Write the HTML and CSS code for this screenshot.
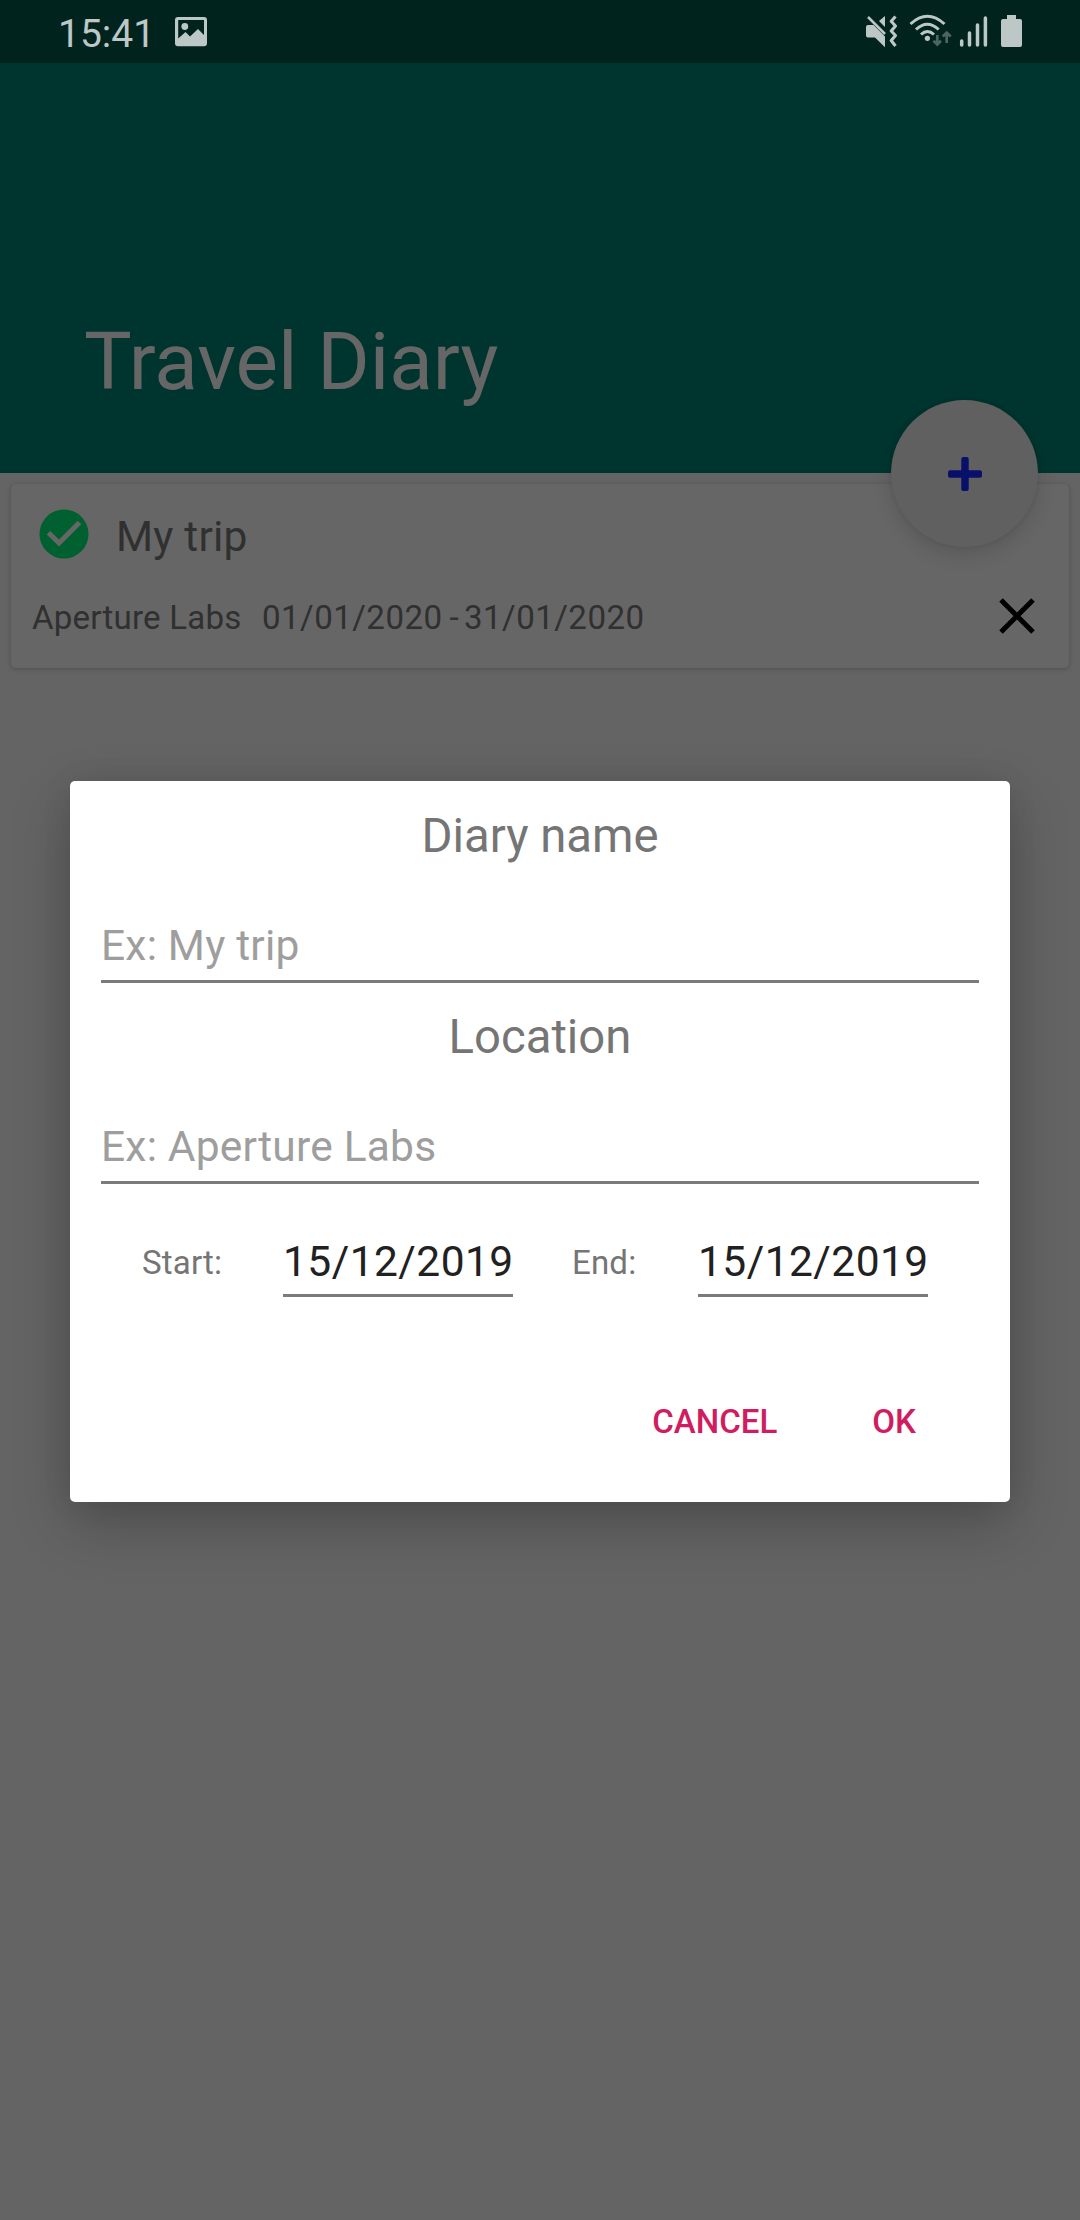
FILE: index.html
```html
<!DOCTYPE html>
<html lang="en">
<head>
<meta charset="utf-8">
<title>Travel Diary</title>
<link rel="stylesheet" href="styles.css">
</head>
<body>
<div class="screen">
  <div class="status-bar">
    <span class="clock">15:41</span>
    <svg class="photo-icon" width="32" height="30" viewBox="0 0 32 30">
      <path fill-rule="evenodd" d="M3 0H29Q32 0 32 3V26Q32 29.3 29 29.3H3Q0 29.3 0 26V3Q0 0 3 0ZM3.2 3V21.5L10.5 15L15 19.5L23 12L29 18V3Z"/>
      <circle cx="9.8" cy="9.5" r="3.4"/>
    </svg>
    <svg class="signal-icons" width="160" height="36" viewBox="0 0 160 36">
      <path d="M3 11H8.5L20 22.5V33.2L10 23.5H3Q1 23.5 1 21.5V13Q1 11 3 11ZM20 2V13L14 7Z"/>
      <path class="line" stroke-width="2.5" d="M3 3L20 20"/>
      <path class="line" stroke-width="3.1" stroke-linejoin="round" d="M30.5 2.5L26.2 7.2L30.5 12L26.2 17L30.5 21.5L26.2 26.5L30.5 32"/>
      <path class="line" stroke-width="3" d="M45.5 10Q62.3-5.5 79.5 10M51 15.5Q62.3 5 73.7 15.5M56 20.5Q62.3 14.5 69 20.5"/>
      <circle cx="62.4" cy="24.3" r="2.6"/>
      <g class="faint"><path class="line" stroke-width="2.7" d="M72.3 21V30M68.5 26.8L72.3 30.5L76 26.8M81.7 29V19.5M77.8 22.5L81.7 18.6L85.7 22.5"/></g>
      <path class="line" stroke-width="3.5" stroke-linecap="round" d="M96.7 27V31M104.5 19V31M112.5 11V31M120.4 4V31"/>
      <path d="M142 1H151V5H155Q157 5 157 7V31Q157 33 155 33H138Q136 33 136 31V7Q136 5 138 5H142Z"/>
    </svg>
  </div>
  <header class="app-header">
    <h1>Travel Diary</h1>
    <button class="fab" aria-label="Add">
      <svg width="36" height="36" viewBox="0 0 36 36"><path d="M3 14.3H14.3V3Q14.3 1 16.3 1H19.7Q21.7 1 21.7 3V14.3H33Q35 14.3 35 16.3V19.7Q35 21.7 33 21.7H21.7V33Q21.7 35 19.7 35H16.3Q14.3 35 14.3 33V21.7H3Q1 21.7 1 19.7V16.3Q1 14.3 3 14.3Z"/></svg>
    </button>
  </header>
  <main class="list">
    <article class="card">
      <div class="card-title">
        <svg width="50" height="50" viewBox="0 0 50 50"><circle cx="25" cy="25" r="24.5"/><path class="check" d="M9.5 23.7L20 34L40.5 13.5"/></svg>
        <span>My trip</span>
      </div>
      <div class="card-info">
        <span class="place">Aperture Labs</span>
        <span class="period">01/01/2020</span><span class="dash">-</span><span class="period">31/01/2020</span>
        <svg class="remove" width="38" height="38" viewBox="0 0 38 38"><path d="M3 3L35 35M35 3L3 35"/></svg>
      </div>
    </article>
  </main>
  <section class="dialog" role="dialog">
    <h2>Diary name</h2>
    <div class="field">Ex: My trip</div>
    <h2>Location</h2>
    <div class="field">Ex: Aperture Labs</div>
    <div class="dates">
      <span class="start-label">Start:</span>
      <span class="date">15/12/2019</span>
      <span class="end-label">End:</span>
      <span class="date">15/12/2019</span>
    </div>
    <div class="actions">
      <button class="cancel">CANCEL</button>
      <button>OK</button>
    </div>
  </section>
</div>
</body>
</html>
```
FILE: styles.css
```css
* { box-sizing: border-box; }
body { margin: 0; font-family: Roboto, sans-serif; }
svg { display: block; flex: none; }
button { border: 0; padding: 0; background: none; font: inherit; color: inherit; }
h1, h2 { margin: 0; font-weight: 400; }

.screen {
  position: relative;
  height: 2220px;
  overflow: hidden;
  background: #646464;
}

.status-bar {
  display: flex;
  align-items: flex-start;
  height: 63px;
  padding-left: 58px;
  background: #00231e;
  color: #bdc8c6;
  fill: #bdc8c6;
}
.clock { width: 117px; font-size: 39px; line-height: 68px; }
.photo-icon { margin-top: 17px; }
.signal-icons { margin: 14px 55px 0 auto; }
.line { fill: none; stroke: #bdc8c6; }
.faint { opacity: .4; }

.app-header {
  position: relative;
  height: 410px;
  padding: 249px 0 0 84px;
  background: #00352f;
}
.app-header h1 { color: #666; font-size: 80px; line-height: 100px; }
.fab {
  position: absolute;
  right: 42px;
  bottom: -74px;
  display: grid;
  place-items: center;
  width: 147px;
  height: 147px;
  border-radius: 50%;
  background: #606060;
  fill: #08106a;
  box-shadow: 0 7px 20px rgba(0, 0, 0, .14), 0 0 4px rgba(0, 0, 0, .08);
}

.list { padding: 11px; }
.card {
  height: 184px;
  border-radius: 5px;
  background: #666;
  color: #303030;
  box-shadow: 0 1px 5px rgba(0, 0, 0, .22);
}
.card-title {
  display: flex;
  gap: 27px;
  height: 104px;
  padding: 25px 0 0 28px;
  fill: #00602f;
  font-size: 42.5px;
  letter-spacing: .2px;
  line-height: 55px;
}
.card-info {
  display: flex;
  align-items: center;
  height: 58px;
  padding: 0 33px 0 21px;
  font-size: 33.08px;
}
.check { fill: none; stroke: #666; stroke-width: 5; }
.place { width: 230px; letter-spacing: .2px; }
.period { width: 182px; letter-spacing: .45px; }
.dash { width: 20px; text-align: center; }
.remove { margin: -2px 0 0 auto; fill: none; stroke: #000; stroke-width: 5; }

.dialog {
  position: absolute;
  left: 70px;
  top: 781px;
  width: 940px;
  height: 721px;
  padding: 25px 31px 0;
  border-radius: 5px;
  background: #fff;
  box-shadow: 0 22px 60px rgba(0, 0, 0, .23), 0 0 30px rgba(0, 0, 0, .08);
}
.dialog h2 {
  height: 110px;
  color: #757575;
  font-size: 47.25px;
  line-height: 60px;
  text-align: center;
}
.field {
  height: 67px;
  margin-bottom: 24px;
  border-bottom: 3px solid #7b7b7b;
  color: #9e9e9e;
  font-size: 42.5px;
  letter-spacing: .2px;
  line-height: 60px;
}
.dates {
  display: flex;
  height: 70px;
  margin-top: 49px;
  padding-left: 41px;
  color: #757575;
  font-size: 33.08px;
  letter-spacing: .15px;
  line-height: 60px;
}
.dates span { flex: none; }
.start-label { width: 141px; }
.end-label { width: 126px; }
.date {
  width: 230px;
  height: 64px;
  margin-right: 59px;
  border-bottom: 3px solid #7b7b7b;
  color: #212121;
  font-size: 42.5px;
  letter-spacing: .45px;
  line-height: 58px;
}
.actions {
  display: flex;
  justify-content: flex-end;
  gap: 95px;
  padding: 95px 63px 0 0;
  color: #d01c60;
  font-size: 33.08px;
  font-weight: 500;
  line-height: 48px;
}
```
